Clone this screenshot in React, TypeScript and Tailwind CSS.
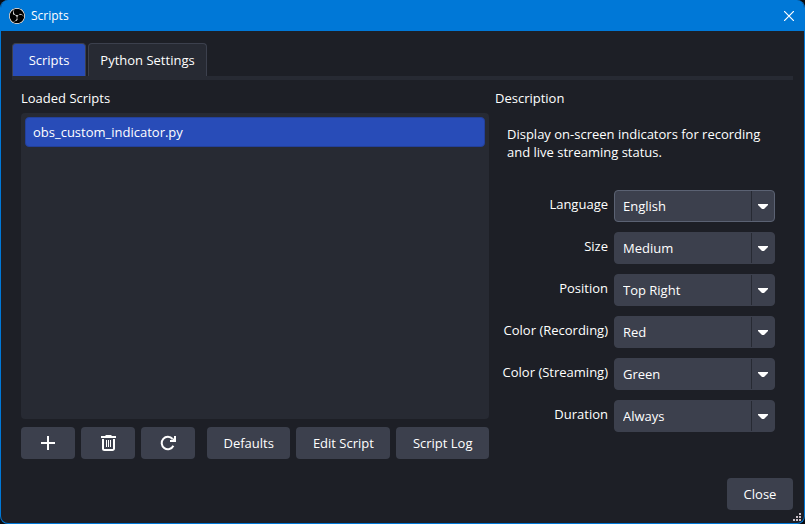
import { useId, useState } from "react";
import { SiObsstudio } from "react-icons/si";

const settings = [
  { label: "Language", options: ["English"] },
  { label: "Size", options: ["Medium", "Small", "Large"] },
  { label: "Position", options: ["Top Right", "Top Left", "Bottom Right", "Bottom Left"] },
  { label: "Color (Recording)", options: ["Red", "Green", "Blue"] },
  { label: "Color (Streaming)", options: ["Green", "Red", "Blue"] },
  { label: "Duration", options: ["Always", "5 seconds"] },
];

const button =
  "flex h-8 items-center justify-center rounded bg-[#3c404d] text-white hover:bg-[#4b5060]";

function Setting({ label, options, active }: { label: string; options: string[]; active: boolean }) {
  const id = useId();
  return (
    <div className="flex items-start justify-end gap-1.5">
      <label htmlFor={id} className="leading-7 whitespace-nowrap">
        {label}
      </label>
      <div className="relative w-[161px] shrink-0">
        <select
          id={id}
          className={`h-8 w-full appearance-none rounded border bg-[#3c404d] pr-8 pl-2 text-white outline-none ${
            active ? "border-[#5b6273]" : "border-[#3c404d]"
          }`}
        >
          {options.map((o) => (
            <option key={o}>{o}</option>
          ))}
        </select>
        <span className="pointer-events-none absolute inset-y-px right-px flex w-[23px] items-center justify-center border-l border-[#272a33]">
          <svg width="10" height="6" viewBox="0 0 10 6" fill="#fff" aria-hidden="true">
            <path d="M0 1h10v1L6 6H4L0 2z" />
          </svg>
        </span>
      </div>
    </div>
  );
}

export default function App() {
  const [tab, setTab] = useState("Scripts");
  return (
    <div className="flex min-h-screen bg-[#0b0c10] font-['Open_Sans','Noto_Sans',sans-serif] text-[13px] leading-[18px] text-white">
      <div className="flex flex-1 flex-col overflow-hidden rounded-lg border-x border-b border-[#0078d7] bg-[#1d1f26]">
        <header className="flex h-[31px] items-center bg-[#0078d7] pr-2.5 pl-2">
          <span className="flex size-4 items-center justify-center rounded-full bg-black">
            <SiObsstudio size={16} color="#fff" aria-hidden="true" />
          </span>
          <h1 className="ml-1.5 flex-1 text-[12px]">Scripts</h1>
          <button aria-label="Close window" className="text-white">
            <svg width="10" height="10" viewBox="0 0 10 10" stroke="#fff" strokeWidth="1.2" fill="none" aria-hidden="true">
              <path d="M0 0l10 10M10 0L0 10" />
            </svg>
          </button>
        </header>

        <main className="flex flex-1 flex-col px-[11px] pt-3">
          <div role="tablist" className="flex gap-0.5 border-b-4 border-[#272a33]">
            {["Scripts", "Python Settings"].map((name) => (
              <button
                key={name}
                role="tab"
                aria-selected={tab === name}
                onClick={() => setTab(name)}
                className={`flex h-[33px] items-center justify-center rounded-t border border-b-0 border-[#3c404d] ${
                  name === "Scripts" ? "w-[74px]" : "w-[119px]"
                } ${tab === name ? "bg-[#284cb8]" : "bg-[#272a33]"}`}
              >
                {name}
              </button>
            ))}
          </div>

          <div className="grid flex-1 grid-cols-[468fr_289fr] gap-1.5 px-[9px] pt-[9px]">
            <section className="flex flex-col">
              <h2>Loaded Scripts</h2>
              <ul className="mt-1.5 flex-1 rounded bg-[#272a33] p-1">
                <li className="flex h-[30px] items-center rounded border border-[#23409a] bg-[#284cb8] px-[7px]">
                  obs_custom_indicator.py
                </li>
              </ul>
              <div className="mt-2 flex gap-1.5">
                <button aria-label="Add script" className={`${button} w-[54px]`}>
                  <svg width="14" height="14" viewBox="0 0 14 14" stroke="#fff" strokeWidth="2" aria-hidden="true">
                    <path d="M7 0v14M0 7h14" />
                  </svg>
                </button>
                <button aria-label="Remove script" className={`${button} w-[54px]`}>
                  <svg width="16" height="16" viewBox="0 0 16 16" fill="none" stroke="#fff" aria-hidden="true">
                    <path d="M1 2h15" strokeWidth="2" />
                    <path d="M5.5 0.5h6" />
                    <path d="M3 4v9.5a1.5 1.5 0 0 0 1.5 1.5h8a1.5 1.5 0 0 0 1.5-1.5V4" strokeWidth="2" />
                    <path d="M6.5 5v7M8.5 5v7M10.5 5v7" />
                  </svg>
                </button>
                <button aria-label="Reload scripts" className={`${button} w-[54px]`}>
                  <svg width="16" height="16" viewBox="0 0 16 16" fill="none" stroke="#fff" strokeWidth="2" aria-hidden="true">
                    <path d="M13.4 10.8A6.2 6.2 0 1 1 12.6 4" />
                    <path d="M14 1h2v6h-6V5h2l2-2z" fill="#fff" stroke="none" />
                  </svg>
                </button>
                <button className={`${button} ml-1.5 flex-auto`}>Defaults</button>
                <button className={`${button} flex-auto`}>Edit Script</button>
                <button className={`${button} flex-auto`}>Script Log</button>
              </div>
            </section>

            <section>
              <h2>Description</h2>
              <p className="mt-[18px] ml-3 max-w-[264px]">
                Display on-screen indicators for recording and live streaming status.
              </p>
              <form className="mt-[29px] flex flex-col gap-2.5 pr-[9px]">
                {settings.map((s, i) => (
                  <Setting key={s.label} {...s} active={i === 0} />
                ))}
              </form>
            </section>
          </div>
        </main>

        <footer className="relative flex justify-end px-[11px] pt-[19px] pb-[13px]">
          <button className={`${button} w-[66px]`}>Close</button>
          <svg
            className="absolute right-[3px] bottom-0.5"
            width="8"
            height="8"
            viewBox="0 0 8 8"
            fill="#c9bfc6"
            aria-hidden="true"
          >
            <path d="M6 0h2v2H6zM3 3h2v2H3zM6 3h2v2H6zM0 6h2v2H0zM3 6h2v2H3zM6 6h2v2H6z" />
          </svg>
        </footer>
      </div>
    </div>
  );
}
